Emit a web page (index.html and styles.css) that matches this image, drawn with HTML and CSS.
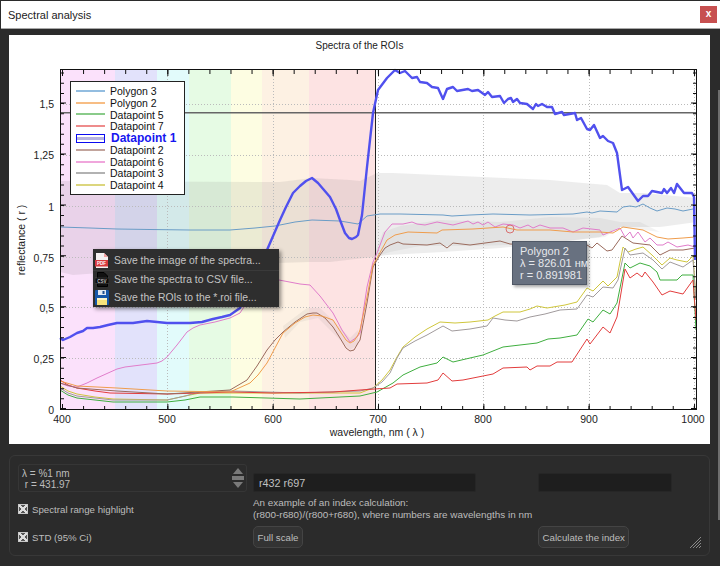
FILE: index.html
```html
<!DOCTYPE html>
<html lang="en">
<head>
    <meta charset="UTF-8">
    <meta name="viewport" content="width=device-width, initial-scale=1.0">
    <title>Spectral analysis</title>
    <link rel="stylesheet" href="styles.css">
</head>
<body>
    <div class="titlebar">
        <span class="title">Spectral analysis</span>
        <button class="close">x</button>
    </div>

    <div class="content">
        <div class="chart">
            <svg class="plot" viewBox="9 35 701 409" width="701" height="409">
                <!-- spectral ranges -->
                <rect x="60" y="70" width="55" height="340" fill="#fbe1fb"/>
                <rect x="115" y="70" width="42" height="340" fill="#e2e2fb"/>
                <rect x="157" y="70" width="32" height="340" fill="#e2fbfb"/>
                <rect x="189" y="70" width="42" height="340" fill="#e6fbe4"/>
                <rect x="231" y="70" width="31" height="340" fill="#fdfde2"/>
                <rect x="262" y="70" width="47" height="340" fill="#fdf1e3"/>
                <rect x="309" y="70" width="66" height="340" fill="#fde3e3"/>

                <!-- STD bands -->
                <path class="std" d="M60 181L280 182L312 178L350 180L360 181L377 173L393 173L460 176L527 179L550 180L583 183L607 185L620 193L643 193L697 198V222L660 227L620 227L600 237L550 243L500 248L443 252L387 255L373 257L330 262L310 262L277 263L200 267L147 270L100 273L73 275L60 272Z"/>
                <path class="std-dark" d="M372 260L383 232L400 226L440 220L500 222L550 217L600 218L620 222L640 222L660 232L620 227L605 237L550 243L510 245L470 246L420 246L390 252L378 256Z"/>
                <path class="std-dark" d="M283 326L307 308L320 308L335 322L350 338L358 330V345L350 350L335 335L318 318L300 322L285 338Z"/>

                <!-- grid -->
                <path class="grid" d="M60 104.5H697M60 155.5H697M60 206.5H697M60 257.5H697M60 307.5H697M60 358.5H697"/>
                <path class="grid" d="M167.5 70V409M273.5 70V409M378.5 70V409M483.5 70V409M589.5 70V409M694.5 70V409"/>

                <path class="level" d="M60 112.7H697"/>
                <path class="cursor" d="M375.5 70V409"/>

                <!-- spectra -->
                <polyline class="curve c-poly3" points="60,227 90,228 117,229 150,229.5 190,230 230,230 255,228 275,226 295,222 312,220 340,221 358,224 367,216 380,214 400,214 443,215 452,216 470,215 493,214 530,215 573,214 587,212 592,213 600,211 617,212 623,207 630,206 636,207 643,204 650,208 657,211 667,208 675,209 683,211 693,209"/>
                <polyline class="curve c-yellow" points="60,386 68,391 77,394 95,397 113,399 167,400 190,395 200,393 233,393 300,393 360,393 373,388 382,380 390,370 397,357 403,347 415,337 427,329 440,322 455,323 470,322 488,320 495,316 503,312 520,312 530,309 537,306 547,308 565,305 577,302 587,288 593,291 603,281 608,286 617,277 623,247 628,252 636,249 643,247 652,255 662,265 670,258 677,260 687,262 693,256 696,300"/>
                <polyline class="curve c-gray" points="60,388 68,393 77,396 95,398 113,400 167,400 185,396 200,392 233,391 300,393 360,391 373,388 382,382 390,373 397,358 403,348 415,341 427,335 443,326 452,331 470,329 487,326 493,318 505,320 517,321 530,317 545,314 560,310 577,309 587,295 593,297 603,287 613,288 618,280 625,248 630,255 643,253 653,260 662,269 670,262 683,267 693,260 696,300"/>
                <polyline class="curve c-green" points="60,390 68,395 77,398 95,400 113,402 167,402 185,400 200,397 233,397 300,399 360,396 377,392 393,383 403,375 420,367 437,363 443,357 453,362 470,358 483,355 503,347 520,345 537,343 548,339 560,338 577,335 588,319 593,322 603,310 610,314 617,303 625,263 630,268 640,263 650,266 657,272 660,280 677,280 682,275 693,275 696,330"/>
                <polyline class="curve c-red" points="60,380 68,385 77,388 95,391 110,393 167,394 233,392 273,393 333,392 360,390 390,388 397,384 427,383 438,380 443,373 452,381 463,380 493,374 503,368 527,367 530,370 537,366 550,366 557,362 572,362 587,339 590,344 603,327 610,333 617,317 625,269 630,278 637,273 642,277 645,272 653,282 662,295 670,291 683,294 693,280 696,320"/>
                <polyline class="curve c-pink" points="60,383 68,386 77,387 87,383 97,378 117,369 125,367 133,366 157,363 162,361 167,357 177,345 187,332 193,328 200,325 215,322 230,318 240,313 255,290 279,280 300,284 310,285 320,296 333,313 342,330 350,342 357,337 360,333 367,287 373,262 377,253 385,232 392,224 403,224 412,222 417,224 425,225 437,222 453,225 468,221 473,224 478,222 483,225 488,222 495,227 503,224 513,225 520,228 528,225 533,228 540,225 550,228 563,228 573,232 583,228 600,230 603,235 620,228 625,237 630,232 633,238 638,232 645,242 650,238 657,245 663,245 668,242 677,247 688,245 695,247"/>
                <polyline class="curve c-brown" points="60,383 77,388 117,391 167,394 230,390 247,380 257,366 267,350 275,340 283,332 295,322 307,314 313,313 317,313 325,318 333,327 340,338 346,348 350,351 354,350 358,343 360,340 367,303 373,267 380,255 385,248 390,245 398,242 403,244 427,245 440,243 447,248 453,243 470,245 500,241 510,244 560,246 587,245 592,248 597,243 607,251 612,250 622,236 633,243 650,245 660,255 670,250 683,250 695,248"/>
                <polyline class="curve c-orange" points="60,381 77,386 117,388 167,391 230,392 250,383 258,375 267,363 275,348 283,333 295,323 305,317 313,315 322,316 333,320 340,331 346,340 350,343 354,341 358,335 360,330 367,297 373,265 377,258 387,240 395,235 408,232 437,233 442,230 473,229 503,227 517,230 550,230 573,232 600,232 613,233 623,227 643,230 657,237 668,239 683,238 695,237"/>
                <polyline class="curve c-blue" points="60,338 63,340 70,337 77,333 83,331 87,328 93,328 100,327 108,325 117,323 125,323 133,323 140,322 147,321 157,322 167,323 178,323 190,323 202,322 213,319 222,317 230,315 240,308 267,250 280,220 286,207 293,193 300,186 306,181 312,178 318,183 324,190 330,197 336,209 340,220 345,233 349,238 352,239 356,237 358,235 362,215 367,167 373,113 378,90 387,78 395,70 400,73 405,71 412,78 417,77 420,82 427,83 432,87 438,88 443,99 447,89 453,87 457,91 468,89 472,91 478,90 485,95 488,92 492,97 500,96 504,103 508,99 511,98 513,102 517,99 520,103 527,104 533,109 536,104 538,106 542,104 547,107 552,107 555,114 562,112 564,115 575,113 577,120 581,118 587,129 590,130 594,125 600,138 603,136 608,141 613,143 617,153 622,190 628,187 638,201 643,196 648,196 652,191 662,193 664,189 667,193 671,188 674,193 677,184 684,193 692,193 694,197 695,260"/>

                <circle class="marker" cx="510" cy="229" r="4"/>

                <!-- ticks -->
                <g class="ticks">
                    <path stroke-width="4" stroke-dasharray="1 20.06" d="M62 72H697M62 408H697"/>
                    <path stroke-width="6" stroke-dasharray="1 104.34" d="M62 73H697M62 407H697"/>
                    <path stroke-width="4" stroke-dasharray="1 9.18" d="M62 409.5V70M695 409.5V70"/>
                    <path stroke-width="6" stroke-dasharray="1 49.9" d="M63 409V70M694 409V70"/>
                </g>
                <rect class="frame" x="60.5" y="69.5" width="636" height="340"/>

                <!-- axis labels -->
                <g class="tick-label tick-x">
                    <text x="62" y="423">400</text>
                    <text x="167" y="423">500</text>
                    <text x="273" y="423">600</text>
                    <text x="378" y="423">700</text>
                    <text x="483" y="423">800</text>
                    <text x="589" y="423">900</text>
                    <text x="693" y="423">1000</text>
                </g>
                <g class="tick-label tick-y">
                    <text x="54" y="108">1,5</text>
                    <text x="54" y="159">1,25</text>
                    <text x="54" y="211">1</text>
                    <text x="54" y="262">0,75</text>
                    <text x="54" y="312">0,5</text>
                    <text x="54" y="363">0,25</text>
                    <text x="54" y="414">0</text>
                </g>
                <text class="axis-title" x="377" y="436">wavelength, nm ( λ )</text>
                <text class="axis-title" transform="translate(25 240) rotate(-90)">reflectance ( r )</text>
            </svg>

            <div class="chart-title">Spectra of the ROIs</div>

            <ul class="legend">
                <li><i class="swatch s-poly3"></i>Polygon 3</li>
                <li><i class="swatch s-orange"></i>Polygon 2</li>
                <li><i class="swatch s-green"></i>Datapoint 5</li>
                <li><i class="swatch s-red"></i>Datapoint 7</li>
                <li class="active"><i class="swatch s-active"></i>Datapoint 1</li>
                <li><i class="swatch s-brown"></i>Datapoint 2</li>
                <li><i class="swatch s-pink"></i>Datapoint 6</li>
                <li><i class="swatch s-gray"></i>Datapoint 3</li>
                <li><i class="swatch s-yellow"></i>Datapoint 4</li>
            </ul>

            <div class="menu">
                <div class="menu-item sep">
                    <svg class="menu-icon" viewBox="0 0 14 15">
                        <path fill="#f4f0f0" d="M1 0H9L13 4V15H1Z"/>
                        <path fill="#f4a0a0" d="M9 0L13 4H9Z"/>
                        <rect x="0" y="7" width="13" height="6.5" fill="#d8393d"/>
                        <text x="6.5" y="12" class="icon-text fill-pdf">PDF</text>
                    </svg>
                    Save the image of the spectra...
                </div>
                <div class="menu-item">
                    <svg class="menu-icon" viewBox="0 0 14 15">
                        <path fill="#111" stroke="#000" d="M2.5 .5H9L12.5 4V14.5H2.5Z"/>
                        <rect x="0" y="6" width="14" height="5.5" fill="#0c0c0c" stroke="#555" stroke-width=".5"/>
                        <text x="7" y="10.5" class="icon-text fill-csv">CSV</text>
                    </svg>
                    Save the spectra to CSV file...
                </div>
                <div class="menu-item">
                    <svg class="menu-icon" viewBox="0 0 14 15">
                        <rect x="0" y="0" width="14" height="15" rx="1" fill="#1657a8"/>
                        <rect x="3" y="0" width="8" height="5" fill="#dfe8f2"/>
                        <rect x="7.5" y="1" width="2" height="3" fill="#1f4f8f"/>
                        <rect x="2" y="8" width="10" height="7" fill="#f7e27a"/>
                        <rect x="2" y="8" width="10" height="2" fill="#fdf6c9"/>
                    </svg>
                    Save the ROIs to the *.roi file...
                </div>
            </div>

            <div class="tip">
                Polygon 2<br>
                λ = 826.01 нм<br>
                r = 0.891981
            </div>
        </div>

        <div class="controls">
            <div class="readout">
                <div class="readout-text">λ = %1 nm<br>&nbsp;r = 431.97</div>
                <div class="spin">
                    <i class="arrow-up"></i>
                    <i class="spin-bar"></i>
                    <i class="arrow-down"></i>
                </div>
            </div>
            <div class="index-input">r432 r697</div>
            <div class="result-input"></div>

            <label class="check"><i class="checkbox"></i>Spectral range highlight</label>
            <div class="hint">An example of an index calculation:<br>(r800-r680)/(r800+r680), where numbers are wavelengths in nm</div>

            <label class="check"><i class="checkbox"></i>STD (95% Ci)</label>
            <div><button class="btn">Full scale</button></div>
            <div><button class="btn">Calculate the index</button></div>

            <svg class="grip" viewBox="0 0 11 11" width="11" height="11">
                <path d="M0 11L11 0M3 11L11 3M6 11L11 6M9 11L11 9"/>
            </svg>
        </div>
    </div>
</body>
</html>
```

FILE: styles.css
```css
* { box-sizing: border-box; }

body {
    margin: 0;
    width: 720px;
    height: 566px;
    overflow: hidden;
    background: linear-gradient(#6e6e6e, #6e6e6e) 718px 90px / 2px 430px no-repeat #2b2b2b;
    font-family: "Liberation Sans", Arial, sans-serif;
    font-size: 11px;
}

.titlebar {
    height: 28px;
    margin-top: 1px;
    margin-left: 1px;
    padding: 0 3px 0 7px;
    display: flex;
    align-items: center;
    justify-content: space-between;
    background-color: #fff;
    border-bottom: 1px solid #a8a8a8;
    color: #222;
}

.close {
    width: 17px;
    height: 17px;
    padding: 0 0 2px;
    border: 0;
    background-color: #c75050;
    color: #fff;
    font-family: inherit;
    font-size: 10px;
    font-weight: bold;
}

.content { padding: 6px 10px 0 9px; }

.chart {
    position: relative;
    width: 701px;
    height: 409px;
    background-color: #fff;
}

.plot { display: block; }

.chart-title {
    position: absolute;
    top: 5px;
    left: 0;
    width: 100%;
    text-align: center;
    font-size: 10px;
    color: #222;
}

/* plot styling */
.std { fill: #777; fill-opacity: .13; }
.std-dark { fill: #777; fill-opacity: .09; }
.grid { fill: none; stroke: #bbb; stroke-width: 1; stroke-dasharray: 1 2; }
.level { stroke: #666; stroke-width: 1.4; }
.cursor { stroke: #222; stroke-width: 1; }
.curve { fill: none; stroke-width: 1; stroke-linejoin: round; filter: blur(.4px); }
.c-poly3 { stroke: #6a9cc6; }
.c-yellow { stroke: #cfc63c; }
.c-gray { stroke: #a09a9c; }
.c-green { stroke: #3fae3f; }
.c-red { stroke: #e23c3c; }
.c-pink { stroke: #e07cca; }
.c-brown { stroke: #9a6a5c; }
.c-orange { stroke: #ef9c4c; }
.c-blue { stroke: #5050ee; stroke-width: 2.4; }
.marker { fill: none; stroke: #d87070; stroke-width: 1; }
.ticks path { fill: none; stroke: #111; }
.frame { fill: none; stroke: #111; stroke-width: 1; }
.tick-label text, .axis-title { font-size: 10.5px; fill: #222; }
.tick-x text, .axis-title { text-anchor: middle; }
.tick-y text { text-anchor: end; }

/* legend */
.legend {
    position: absolute;
    left: 61px;
    top: 46px;
    width: 115px;
    height: 114px;
    margin: 0;
    padding: 3px 0 0 5px;
    list-style: none;
    background-color: #fff;
    border: 1px solid #222;
    color: #111;
    font-size: 10.5px;
}

.legend li {
    display: flex;
    align-items: center;
    height: 11.8px;
    white-space: nowrap;
}

.legend .active {
    color: #1616f0;
    font-size: 12px;
    font-weight: bold;
}

.swatch {
    width: 29px;
    height: 2px;
    margin-right: 5px;
    flex: none;
}

.s-poly3 { background-color: #93bde0; }
.s-orange { background-color: #f7bd84; }
.s-green { background-color: #8acb8a; }
.s-red { background-color: #ee8c8c; }
.s-brown { background-color: #c2a49c; }
.s-pink { background-color: #f0a6dc; }
.s-gray { background-color: #b2b2b2; }
.s-yellow { background-color: #dcd67e; }
.s-active {
    height: 9px;
    margin-right: 6px;
    background: linear-gradient(#fff 35%, #b5b2e0 35%, #b5b2e0 65%, #fff 65%);
    border: 1.5px solid #0a0af0;
}

/* context menu */
.menu {
    position: absolute;
    left: 84px;
    top: 214px;
    width: 186px;
    height: 58px;
    padding-top: 2px;
    background-color: #2e2e2e;
    color: #c4c4c4;
    font-size: 10.4px;
    box-shadow: 2px 2px 4px rgba(0, 0, 0, .45);
}

.menu-item {
    display: flex;
    align-items: center;
    gap: 5px;
    height: 18px;
    padding-left: 2px;
    white-space: nowrap;
}

.menu-item.sep {
    height: 19px;
    box-shadow: 0 1px 0 #3a3a3a;
}

.menu-icon { width: 14px; height: 15px; flex: none; }

.icon-text { font-size: 4.5px; font-weight: bold; text-anchor: middle; }
.fill-pdf { fill: #fff; }
.fill-csv { fill: #bbb; }

/* tooltip */
.tip {
    position: absolute;
    left: 503px;
    top: 206px;
    width: 75px;
    height: 44px;
    padding: 3px 0 0 7px;
    line-height: 12px;
    background-color: #687180;
    border: 1px solid #505866;
    color: #e6e8ec;
    box-shadow: 2px 2px 3px rgba(0, 0, 0, .35);
    white-space: nowrap;
}

/* bottom panel */
.controls {
    position: relative;
    margin-top: 11px;
    width: 701px;
    height: 101px;
    padding: 8px 0 0 8px;
    display: grid;
    grid-template-columns: 235px 285px 134px;
    grid-template-rows: 28px 34px 22px;
    color: #bdbdbd;
    font-size: 10px;
    border: 1px solid #383838;
    border-radius: 6px;
}

.controls > * { min-width: 0; }

.readout {
    display: flex;
    justify-content: space-between;
    width: 229px;
    height: 28px;
    padding: 3px 0 0 3px;
    line-height: 11px;
    border: 1px solid #363636;
    border-radius: 3px;
}

.spin {
    display: flex;
    flex-direction: column;
    align-items: center;
    gap: 2px;
    width: 14px;
    margin-right: 1px;
}

.arrow-up, .arrow-down {
    width: 0;
    height: 0;
    border-left: 5px solid transparent;
    border-right: 5px solid transparent;
}
.arrow-up { border-bottom: 6px solid #7a7a7a; }
.arrow-down { border-top: 6px solid #7a7a7a; }
.spin-bar { width: 12px; height: 4px; background-color: #7a7a7a; }

.index-input, .result-input {
    align-self: end;
    height: 19px;
    background-color: #1e1e1e;
    border: 1px solid #262626;
    border-radius: 2px;
}

.index-input {
    width: 223px;
    padding: 3px 0 0 5px;
    color: #c0c0c0;
    font-size: 10.8px;
}

.check {
    display: flex;
    align-items: center;
    gap: 4px;
    font-size: 9.7px;
}

.checkbox {
    width: 10px;
    height: 10px;
    flex: none;
    border: 1px solid #c8c8c8;
    background-color: #555;
    background-image:
        linear-gradient(45deg, transparent 38%, #ddd 38%, #ddd 62%, transparent 62%),
        linear-gradient(-45deg, transparent 38%, #ddd 38%, #ddd 62%, transparent 62%);
}

.hint {
    grid-column: span 2;
    padding-top: 5px;
    line-height: 12px;
    font-size: 9.9px;
    white-space: nowrap;
}

.btn {
    display: block;
    height: 22px;
    padding: 0 3.5px;
    background-color: #333;
    border: 1px solid #444;
    border-radius: 5px;
    color: #bdbdbd;
    font-family: inherit;
    font-size: 9.7px;
}

.grip {
    position: absolute;
    right: 8px;
    bottom: 7px;
}

.grip path { stroke: #8a8a8a; stroke-width: 1; fill: none; }
```
